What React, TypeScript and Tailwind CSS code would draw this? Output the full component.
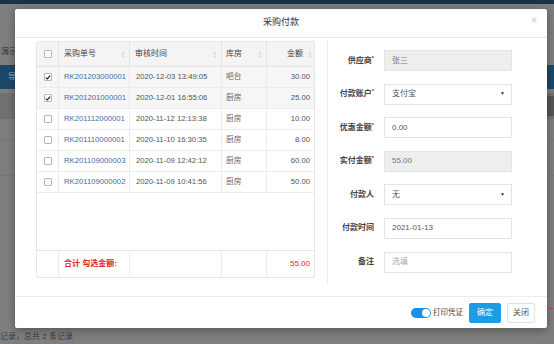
import { useState } from "react";

type Row = {
  checked: boolean;
  no: string;
  time: string;
  store: string;
  amount: string;
};

const rows: Row[] = [
  { checked: true, no: "RK201203000001", time: "2020-12-03 13:49:05", store: "吧台", amount: "30.00" },
  { checked: true, no: "RK201201000001", time: "2020-12-01 16:55:06", store: "厨房", amount: "25.00" },
  { checked: false, no: "RK201112000001", time: "2020-11-12 12:13:38", store: "厨房", amount: "10.00" },
  { checked: false, no: "RK201110000001", time: "2020-11-10 16:30:35", store: "厨房", amount: "8.00" },
  { checked: false, no: "RK201109000003", time: "2020-11-09 12:42:12", store: "厨房", amount: "60.00" },
  { checked: false, no: "RK201109000002", time: "2020-11-09 10:41:56", store: "厨房", amount: "50.00" },
];

const cols = "grid grid-cols-[22px_71px_92px_45px_49px]";

function Box({ checked }: { checked?: boolean }) {
  return (
    <span className="flex h-[8px] w-[8px] items-center justify-center rounded-[1px] border border-[#b5b5b5] bg-white">
      {checked && (
        <svg viewBox="0 0 8 8" className="h-[7px] w-[7px]">
          <path d="M1.2 4.2 L3.2 6 L6.8 1.6" fill="none" stroke="#222" strokeWidth="1.6" />
        </svg>
      )}
    </span>
  );
}

function Sort() {
  return (
    <svg viewBox="0 0 4 8" className="h-[7px] w-[4px]">
      <path d="M2 0.5 L3.6 3 L0.4 3 Z M2 7.5 L3.6 5 L0.4 5 Z" fill="#cfcfcf" />
    </svg>
  );
}

function Field({
  label,
  star,
  children,
}: {
  label: string;
  star?: boolean;
  children: React.ReactNode;
}) {
  return (
    <div className="flex h-[21px] items-center">
      <div className="w-[47px] pr-[1px] text-right text-[8px] font-bold text-[#444]">
        {label}
        {star && <sup className="text-[6px] text-[#a33]">*</sup>}
      </div>
      <div className="ml-[9px] h-full w-[128px]">{children}</div>
    </div>
  );
}

function Input({ value, disabled, placeholder }: { value?: string; disabled?: boolean; placeholder?: string }) {
  return (
    <div
      className={`flex h-full items-center border border-[#e3e3e3] pl-[7px] text-[8px] ${
        disabled ? "bg-[#eeeeee] text-[#777]" : "bg-white text-[#555]"
      }`}
    >
      {value ?? <span className="text-[#aaa]">{placeholder}</span>}
    </div>
  );
}

function Select({ value }: { value: string }) {
  return (
    <div className="flex h-full items-center justify-between border border-[#e3e3e3] bg-white pl-[7px] pr-[6px] text-[8px] text-[#555]">
      <span>{value}</span>
      <span className="text-[5px] text-[#333]">▼</span>
    </div>
  );
}

export default function App() {
  const [print, setPrint] = useState(true);

  return (
    <div className="relative h-[344px] w-[554px] overflow-hidden bg-[#7e7e7e] font-[Liberation_Sans,Noto_Sans_CJK_SC,sans-serif]">
      {/* dimmed page behind the dialog */}
      <div className="h-[4px] bg-[#1d3145]" />
      <div className="mt-[42px] h-[12px] pl-[1px] text-[8px] text-[#333]">演示</div>
      <div className="mt-[7px] flex h-[24px] items-center bg-[#1b4868] pl-[8px] text-[8px] text-[#8fb3cc]">导</div>
      <div className="mt-[4px] h-[26px] bg-[#717171]" />
      <div className="mt-[21px] h-px bg-[#777]" />
      <div className="mt-[34px] h-px bg-[#777]" />
      <div className="absolute right-0 top-[96px] h-[20px] w-[7px] bg-[#555]" />
      <div className="absolute right-[1px] top-[308px] h-px w-[3px] bg-[#c33]" />
      <div className="absolute bottom-[1px] left-0 text-[8px] text-[#3a3a3a]">记录，总共 2 条记录</div>

      {/* dialog */}
      <div className="absolute left-[15px] top-[9px] flex h-[319px] w-[532px] flex-col rounded-[2px] bg-white shadow-[0_2px_8px_rgba(0,0,0,0.35)]">
        <div className="relative flex h-[29px] shrink-0 items-center justify-center border-b border-[#eaeaea]">
          <span className="text-[9px] text-[#333]">采购付款</span>
          <span className="absolute right-[10px] top-[7px] text-[10px] leading-none text-[#c4c4c4]">×</span>
        </div>

        <div className="flex flex-1 pl-[21px] pt-[3px]">
          {/* table */}
          <div className="flex h-[237px] w-[279px] flex-col rounded-[2px] border border-[#e6e6e6]">
            <div className={`${cols} h-[25px] shrink-0 border-b border-[#e3e3e3] bg-[#f4f4f4] text-[8px] text-[#444]`}>
              <div className="flex items-center justify-center border-r border-[#e3e3e3]">
                <Box />
              </div>
              <div className="flex items-center justify-between border-r border-[#e3e3e3] pl-[5px] pr-[4px]">
                采购单号 <Sort />
              </div>
              <div className="flex items-center justify-between border-r border-[#e3e3e3] pl-[5px] pr-[4px]">
                审核时间 <Sort />
              </div>
              <div className="flex items-center justify-between border-r border-[#e3e3e3] pl-[4px] pr-[4px]">
                库房 <Sort />
              </div>
              <div className="flex items-center justify-end gap-[5px] pr-[4px]">
                金额 <Sort />
              </div>
            </div>

            {rows.map((r) => (
              <div
                key={r.no}
                className={`${cols} h-[21px] shrink-0 border-b border-[#ececec] text-[7.7px] ${
                  r.checked ? "bg-[#f6f6f6]" : "bg-white"
                }`}
              >
                <div className="flex items-center justify-center border-r border-[#ececec]">
                  <Box checked={r.checked} />
                </div>
                <div className="flex items-center border-r border-[#ececec] pl-[5px] text-[#3f6da3]">{r.no}</div>
                <div className="flex items-center border-r border-[#ececec] pl-[6px] text-[#555]">{r.time}</div>
                <div className="flex items-center border-r border-[#ececec] pl-[4px] text-[#666]">{r.store}</div>
                <div className="flex items-center justify-end pr-[6px] text-[#555]">{r.amount}</div>
              </div>
            ))}

            <div className="flex-1 border-b border-[#e6e6e6]" />

            <div className={`${cols} h-[26px] shrink-0 text-[8px] font-bold text-[#e0262b]`}>
              <div className="border-r border-[#ececec]" />
              <div className="flex items-center border-r border-[#ececec] pl-[5px]">合计 勾选金额:</div>
              <div className="border-r border-[#ececec]" />
              <div className="border-r border-[#ececec]" />
              <div className="flex items-center justify-end pr-[6px] font-normal">55.00</div>
            </div>
          </div>

          <div className="ml-[12px] h-[244px] w-px bg-[#ececec]" />

          {/* form */}
          <div className="flex flex-col gap-[12.6px] pt-[9px]">
            <Field label="供应商" star>
              <Input value="张三" disabled />
            </Field>
            <Field label="付款账户" star>
              <Select value="支付宝" />
            </Field>
            <Field label="优惠金额" star>
              <Input value="0.00" />
            </Field>
            <Field label="实付金额" star>
              <Input value="55.00" disabled />
            </Field>
            <Field label="付款人">
              <Select value="无" />
            </Field>
            <Field label="付款时间">
              <Input value="2021-01-13" />
            </Field>
            <Field label="备注">
              <Input placeholder="选填" />
            </Field>
          </div>
        </div>

        <div className="flex h-[32px] shrink-0 items-center justify-end border-t border-[#ececec] pr-[12px]">
          <button
            type="button"
            onClick={() => setPrint(!print)}
            className={`flex h-[10px] w-[20px] items-center rounded-full px-[1px] ${
              print ? "justify-end bg-[#1d8ee6]" : "justify-start bg-[#ccc]"
            }`}
          >
            <span className="h-[8px] w-[8px] rounded-full bg-white" />
          </button>
          <span className="ml-[2px] text-[7.5px] text-[#444]">打印凭证</span>
          <button type="button" className="ml-[6px] h-[20px] w-[32px] rounded-[2px] bg-[#1b9ce3] text-[8px] text-white">
            确定
          </button>
          <button
            type="button"
            className="ml-[6px] h-[20px] w-[28px] rounded-[2px] border border-[#e0e0e0] bg-white text-[8px] text-[#555]"
          >
            关闭
          </button>
        </div>
      </div>
    </div>
  );
}
